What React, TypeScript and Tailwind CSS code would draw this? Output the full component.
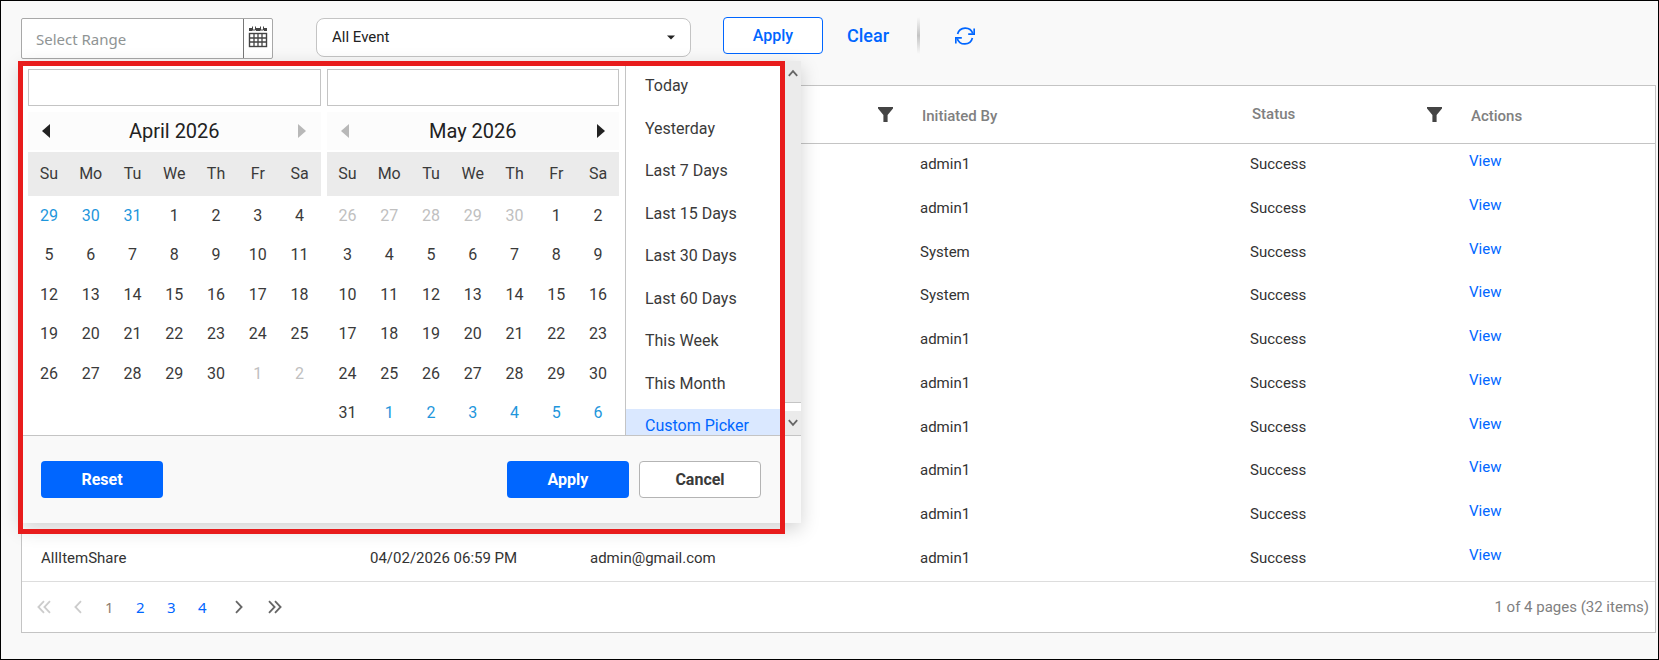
import { useState } from "react";
import clsx from "clsx";

type Day = { n: number; tone?: "blue" | "muted" };

const WEEKDAYS = ["Su", "Mo", "Tu", "We", "Th", "Fr", "Sa"];

const RANGES = [
  "Today",
  "Yesterday",
  "Last 7 Days",
  "Last 15 Days",
  "Last 30 Days",
  "Last 60 Days",
  "This Week",
  "This Month",
  "Custom Picker",
];

const ROWS = [
  { by: "admin1" },
  { by: "admin1" },
  { by: "System" },
  { by: "System" },
  { by: "admin1" },
  { by: "admin1" },
  { by: "admin1" },
  { by: "admin1" },
  { by: "admin1" },
  { event: "AllItemShare", date: "04/02/2026 06:59 PM", email: "admin@gmail.com", by: "admin1" },
];

function span(from: number, to: number, tone?: Day["tone"]): Day[] {
  return Array.from({ length: to - from + 1 }, (_, i) => ({ n: from + i, tone }));
}

const APRIL = [...span(29, 31, "blue"), ...span(1, 30), ...span(1, 2, "muted")];
const MAY = [...span(26, 30, "muted"), ...span(1, 31), ...span(1, 6, "blue")];

function CalendarIcon() {
  return (
    <svg width="20" height="22" viewBox="0 0 20 22" fill="none" stroke="#444">
      <path d="M1 3.5h3.5M8 3.5h4.5M16 3.5h3" strokeWidth="3" />
      <path d="M4.5 0.5v3.5h3v-3.5M12.5 0.5v3.5h3v-3.5" strokeWidth="1" />
      <rect x="1.5" y="7.5" width="17" height="13" strokeWidth="1.4" />
      <path d="M1.5 12h17M1.5 16h17M6 7.5v13M10 7.5v13M14 7.5v13" strokeWidth="1.3" />
    </svg>
  );
}

function RefreshIcon() {
  return (
    <svg width="20" height="18" viewBox="0 0 20 18" fill="none" stroke="#0066ff" strokeWidth="1.7">
      <path d="M2.6 7A7.9 7.9 0 0 1 17.8 6.6M17.4 11A7.9 7.9 0 0 1 2.2 11.4" />
      <path d="M19.2 1.4v5.7h-6M0.8 16.6v-5.7h6" />
    </svg>
  );
}

function FilterIcon() {
  return (
    <svg width="15" height="15" viewBox="0 0 15 15" fill="#444">
      <path d="M0 0h15v1.6L9.6 8v7H5.4V8L0 1.6z" />
    </svg>
  );
}

function Arrow({ left, muted }: { left?: boolean; muted?: boolean }) {
  return (
    <button aria-label={left ? "Previous month" : "Next month"} className="h-4 w-2">
      <svg width="8" height="14" viewBox="0 0 8 14" fill={muted ? "#b8b8b8" : "#222"}>
        <path d={left ? "M8 0v14L0 7z" : "M0 0v14l8-7z"} />
      </svg>
    </button>
  );
}

function Month({ title, days, first }: { title: string; days: Day[]; first?: boolean }) {
  const weeks = Array.from({ length: 6 }, (_, w) => days.slice(w * 7, w * 7 + 7));
  return (
    <div className="flex-1">
      <input aria-label={title} className="block h-[37px] w-full border border-[#c4c4c4] bg-white px-2" />
      <div className="mt-1.5 mb-0.5 flex h-[38px] items-center justify-between bg-[#fcfcfc] px-3.5">
        <Arrow left muted={!first} />
        <span className="text-xl text-[#222]">{title}</span>
        <Arrow muted={first} />
      </div>
      <table className="h-[281px] w-full table-fixed text-center text-base text-[#3a3a3a]">
        <thead className="bg-[#ebebeb]">
          <tr className="h-11">
            {WEEKDAYS.map((d) => (
              <th key={d} className="font-normal">
                {d}
              </th>
            ))}
          </tr>
        </thead>
        <tbody>
          {weeks.map((week, w) => (
            <tr key={w} className="h-[39px]">
              {WEEKDAYS.map((_, i) => (
                <td
                  key={i}
                  className={clsx(
                    week[i]?.tone === "blue" && "text-[#1e96dc]",
                    week[i]?.tone === "muted" && "text-[#c0c0c0]"
                  )}
                >
                  {week[i]?.n}
                </td>
              ))}
            </tr>
          ))}
        </tbody>
      </table>
    </div>
  );
}

function RangePicker() {
  const [range, setRange] = useState("Custom Picker");
  return (
    <div className="absolute top-[60px] left-0 z-10 w-[780px] bg-white shadow-[0_6px_18px_rgba(0,0,0,0.18)]">
      <div className="flex h-[374px] overflow-hidden">
        <div className="flex w-[604px] gap-1.5 pt-2 pr-1.5 pl-[7px]">
          <Month title="April 2026" days={APRIL} first />
          <Month title="May 2026" days={MAY} />
        </div>
        <ul className="grid h-[391px] flex-1 grid-rows-9 border-l border-[#c4c4c4] pt-2">
          {RANGES.map((r) => (
            <li key={r} className={clsx(r === range && "bg-[#dae8ff]")}>
              <button
                onClick={() => setRange(r)}
                className={clsx(
                  "h-[34px] w-full pl-[19px] text-left text-base",
                  r === range ? "text-[#0066ff]" : "text-[#3a3a3a]"
                )}
              >
                {r}
              </button>
            </li>
          ))}
        </ul>
        <div className="flex w-4 flex-col bg-[#ebebeb]">
          <div className="flex flex-1 justify-center border-b border-[#c4c4c4] pt-2">
            <svg width="10" height="8" viewBox="0 0 10 8" fill="none" stroke="#666" strokeWidth="1.8">
              <path d="M0.8 6.8L5 2.2l4.2 4.6" />
            </svg>
          </div>
          <div className="h-2 bg-white" />
          <div className="flex h-6 items-center justify-center">
            <svg width="10" height="8" viewBox="0 0 10 8" fill="none" stroke="#666" strokeWidth="1.8">
              <path d="M0.8 1.2L5 5.8l4.2-4.6" />
            </svg>
          </div>
        </div>
      </div>
      <div className="flex gap-2.5 border-t border-[#c4c4c4] bg-[#f9f9f9] py-[25px] pr-10 pl-5 text-base">
        <button className="mr-auto h-[37px] w-[122px] rounded bg-[#0066ff] font-bold text-white">Reset</button>
        <button className="h-[37px] w-[122px] rounded bg-[#0066ff] font-bold text-white">Apply</button>
        <button className="h-[37px] w-[122px] rounded border border-[#b4b4b4] bg-white font-bold text-[#3a3a3a]">
          Cancel
        </button>
      </div>
      <div className="pointer-events-none absolute top-0 right-4 -bottom-[11px] -left-[3px] border-5 border-[#e81c1c]" />
    </div>
  );
}

function Toolbar() {
  return (
    <div className="relative flex h-[84px] items-start pt-4">
      <div className="flex items-start gap-[43px] pt-px">
        <div className="flex h-[41px] w-[252px] rounded-xs border border-[#a8a8a8] bg-white">
          <input
            aria-label="Select Range"
            placeholder="Select Range"
            className="min-w-0 flex-1 pt-0.5 pl-3.5 font-['Noto_Sans',sans-serif] text-[15px] outline-none placeholder:text-[#8f9494]"
          />
          <button aria-label="Open calendar" className="flex w-[29px] justify-center border-l border-[#777] pt-[7px]">
            <CalendarIcon />
          </button>
        </div>
        <div className="relative w-[375px]">
          <select
            aria-label="Event"
            className="h-[39px] w-full appearance-none rounded-lg border border-[#c4c4c4] bg-white pl-[15px] text-[15px] text-[#222]"
          >
            <option>All Event</option>
          </select>
          <svg className="pointer-events-none absolute top-[17px] right-4" width="8" height="5" viewBox="0 0 8 5">
            <path d="M0 0.5h8L4 4.5z" fill="#222" />
          </svg>
        </div>
      </div>
      <button className="ml-8 h-[37px] w-[100px] rounded border border-[#0066ff] bg-white text-base font-medium text-[#0066ff]">
        Apply
      </button>
      <button className="ml-6 h-[37px] text-lg font-medium text-[#0066ff]">Clear</button>
      <div className="ml-7 h-[37px] w-[3px] bg-linear-to-b from-transparent via-[#c4c4c4] to-transparent" />
      <button aria-label="Refresh" className="ml-[35px] flex h-[37px] items-center">
        <RefreshIcon />
      </button>
      <RangePicker />
    </div>
  );
}

function EventTable() {
  return (
    <table className="h-[495px] w-full table-fixed text-left text-[15px] text-[#333]">
      <colgroup>
        <col className="w-[329px]" />
        <col className="w-[220px]" />
        <col className="w-[330px]" />
        <col className="w-[330px]" />
        <col className="w-[219px]" />
        <col className="w-[206px]" />
      </colgroup>
      <thead className="text-[#808080]">
        <tr className="h-[57px] border-b border-[#c4c4c4] align-middle">
          <th />
          <th />
          <th className="pr-2">
            <button aria-label="Filter" className="float-right">
              <FilterIcon />
            </button>
          </th>
          <th className="pt-1 pl-[21px] font-medium">Initiated By</th>
          <th className="pr-2 pl-[21px] font-medium">
            <div className="flex items-center justify-between">
              Status
              <button aria-label="Filter">
                <FilterIcon />
              </button>
            </div>
          </th>
          <th className="pt-1 pl-[21px] font-medium">Actions</th>
        </tr>
      </thead>
      <tbody>
        {ROWS.map((row, i) => (
          <tr key={i}>
            <td className="pb-0.5 pl-[19px]">{row.event}</td>
            <td className="pb-0.5 pl-[19px]">{row.date}</td>
            <td className="pb-0.5 pl-[19px]">{row.email}</td>
            <td className="pb-0.5 pl-[19px]">{row.by}</td>
            <td className="pb-0.5 pl-[19px]">Success</td>
            <td className="pb-2 pl-[19px]">
              <a href="#" className="text-[#0066ff]">
                View
              </a>
            </td>
          </tr>
        ))}
      </tbody>
    </table>
  );
}

function Chevron({ left, double }: { left?: boolean; double?: boolean }) {
  return (
    <svg
      width={double ? 14 : 8}
      height="14"
      viewBox={double ? "0 0 14 14" : "0 0 8 14"}
      fill="none"
      stroke={left ? "#ccc" : "#666"}
      strokeWidth="1.8"
    >
      <path d={left ? "M7 1.2L1.4 7 7 12.8" : "M1 1.2L6.6 7 1 12.8"} />
      {double && <path d={left ? "M13 1.2L7.4 7l5.6 5.8" : "M7 1.2L12.6 7 7 12.8"} />}
    </svg>
  );
}

function Pager() {
  return (
    <div className="flex h-[51px] items-center justify-between border-t border-[#ddd] pr-1.5 pl-[15px] text-[15px]">
      <div className="flex items-center font-['Noto_Sans',sans-serif] text-[#0066ff]">
        <button aria-label="First page" disabled>
          <Chevron left double />
        </button>
        <button aria-label="Previous page" disabled className="mr-[17px] ml-[23px]">
          <Chevron left />
        </button>
        <span className="w-[31px] pl-1.5 text-[#8f8070]">1</span>
        <button className="w-[31px] pl-1.5 text-left">2</button>
        <button className="w-[31px] pl-1.5 text-left">3</button>
        <button className="w-[31px] pl-1.5 text-left">4</button>
        <button aria-label="Next page" className="mr-[25px] ml-3">
          <Chevron />
        </button>
        <button aria-label="Last page">
          <Chevron double />
        </button>
      </div>
      <span className="text-[#808080]">1 of 4 pages (32 items)</span>
    </div>
  );
}

export default function App() {
  return (
    <div className="min-h-screen border border-black bg-[#f9f9f9] pr-0.5 pb-6 pl-5 font-[Roboto,sans-serif]">
      <Toolbar />
      <div className="border border-[#c4c4c4] bg-white">
        <EventTable />
        <Pager />
      </div>
    </div>
  );
}
